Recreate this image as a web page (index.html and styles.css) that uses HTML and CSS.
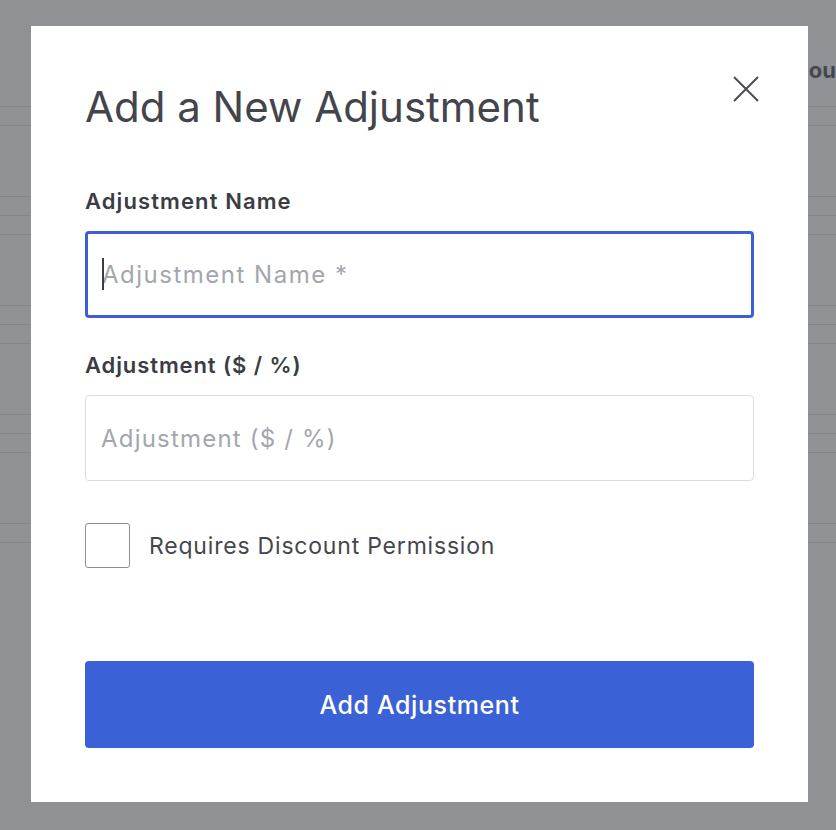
FILE: index.html
```html
<!DOCTYPE html>
<html lang="en">
<head>
    <meta charset="UTF-8">
    <meta name="viewport" content="width=device-width, initial-scale=1.0">
    <title>Add a New Adjustment</title>
    <link rel="stylesheet" href="styles.css">
</head>
<body>
    <!-- page behind the modal -->
    <div class="page">
        <div class="page-head">Discou</div>
        <div class="row"></div>
        <div class="row row-tall"></div>
        <div class="row"></div>
        <div class="row"></div>
        <div class="row row-tall"></div>
        <div class="row"></div>
        <div class="row"></div>
        <div class="row row-tall"></div>
        <div class="row"></div>
        <div class="row"></div>
        <div class="row row-tall"></div>
        <div class="row"></div>
        <div class="row"></div>
    </div>

    <div class="overlay">
        <div class="modal">
            <button class="close-btn" aria-label="Close">
                <svg width="26" height="26" viewBox="0 0 26 26">
                    <path d="M1 1 L25 25 M25 1 L1 25" stroke="#4b4d54" stroke-width="2" fill="none"/>
                </svg>
            </button>

            <h1 class="modal-title">Add a New Adjustment</h1>

            <div class="field">
                <label for="adjName">Adjustment Name</label>
                <div class="input-wrap">
                    <input type="text" id="adjName" class="text-input focused" placeholder="Adjustment Name *">
                    <span class="caret"></span>
                </div>
            </div>

            <div class="field">
                <label for="adjValue">Adjustment ($ / %)</label>
                <input type="text" id="adjValue" class="text-input" placeholder="Adjustment ($ / %)">
            </div>

            <label class="check-row">
                <span class="check-box"></span>
                <span class="check-label">Requires Discount Permission</span>
            </label>

            <button class="submit-btn">Add Adjustment</button>
        </div>
    </div>
</body>
</html>
```

FILE: styles.css
```css
* {
    margin: 0;
    padding: 0;
    box-sizing: border-box;
}

body {
    font-family: 'Inter', 'Liberation Sans', sans-serif;
    background: #909195;
    width: 836px;
    height: 830px;
    overflow: hidden;
}

.page {
    padding-top: 56px;
}

.page-head {
    text-align: right;
    font-size: 22px;
    font-weight: 700;
    color: #46474c;
    line-height: 28px;
    height: 50px;
    white-space: nowrap;
}

.row {
    height: 19px;
    border-top: 1px solid #838488;
}

.row-tall {
    height: 71px;
}

.overlay {
    position: fixed;
    inset: 0;
    padding: 26px 0 0 31px;
}

.modal {
    position: relative;
    width: 777px;
    height: 776px;
    background: #fff;
    padding: 55px 54px 0 54px;
}

.close-btn {
    position: absolute;
    top: 50px;
    right: 49px;
    background: none;
    border: none;
    width: 26px;
    height: 26px;
    cursor: pointer;
}

.modal-title {
    font-size: 42px;
    font-weight: 400;
    color: #43454c;
    line-height: 52px;
    margin-bottom: 54px;
}

.field {
    margin-bottom: 33px;
}

.field label {
    display: block;
    font-size: 22px;
    font-weight: 600;
    letter-spacing: 1.1px;
    color: #3b3d44;
    line-height: 28px;
    margin-bottom: 16px;
}

.field label[for="adjValue"] {
    letter-spacing: 0.9px;
}

.input-wrap {
    position: relative;
}

.caret {
    position: absolute;
    left: 17px;
    top: 27px;
    width: 2px;
    height: 32px;
    background: #3b3d44;
}

.text-input {
    display: block;
    width: 100%;
    height: 86px;
    border: 1px solid #dcdde1;
    border-radius: 4px;
    padding: 0 15px;
    font-family: inherit;
    font-size: 24px;
    letter-spacing: 1.2px;
    color: #3b3d44;
    outline: none;
}

.text-input::placeholder {
    color: #a3a6ad;
}

.text-input.focused {
    height: 87px;
    border: 3px solid #3d5fd4;
    padding: 0 14px;
    letter-spacing: 1.5px;
}

.check-row {
    display: flex;
    align-items: center;
    gap: 19px;
    margin-top: 42px;
    cursor: pointer;
}

.check-box {
    width: 45px;
    height: 45px;
    border: 1px solid #8c8e94;
    border-radius: 3px;
}

.check-label {
    font-size: 23px;
    letter-spacing: 0.8px;
    color: #45474e;
}

.submit-btn {
    display: block;
    width: 100%;
    height: 87px;
    margin-top: 93px;
    background: #3b61d6;
    color: #fff;
    border: none;
    border-radius: 4px;
    font-family: inherit;
    font-size: 25px;
    font-weight: 500;
    letter-spacing: 0.6px;
    cursor: pointer;
}
```
